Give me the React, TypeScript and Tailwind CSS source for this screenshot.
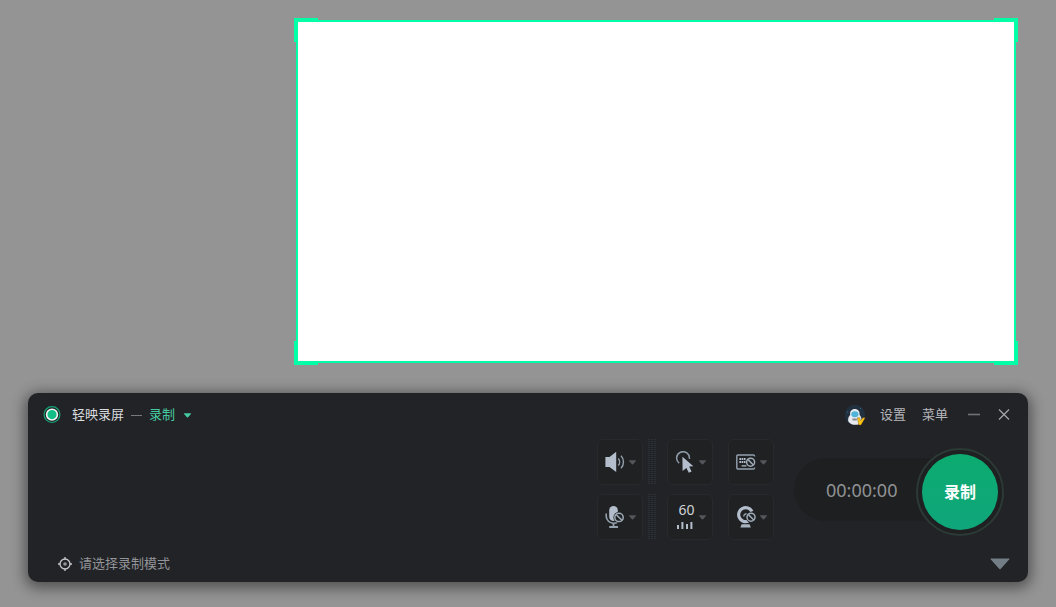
import React, { useState } from 'react';

const Caret: React.FC<{ className?: string }> = ({ className }) => (
  <svg viewBox="0 0 8 5" className={`w-[7px] h-[5px] shrink-0 ${className ?? ''}`} fill="currentColor" aria-hidden="true">
    <path d="M0.4 0h7.2a.4.4 0 0 1 .3.7L4.4 4.7a.55.55 0 0 1-.8 0L.1.7A.4.4 0 0 1 .4 0Z" />
  </svg>
);

const SpeakerIcon = () => (
  <svg viewBox="0 0 20 22" className="w-5 h-[22px]" fill="none" aria-hidden="true">
    <path d="M0.4 6H4.5L11.2 0.8V21L4.5 16H0.4Z" fill="#b3bdcb" />
    <path d="M13.3 7.4c1.7 2 1.7 5.2 0 7.2" stroke="#94a0ae" strokeWidth="1.5" />
    <path d="M16 4.8c3.3 3.3 3.3 9.1 0 12.4" stroke="#94a0ae" strokeWidth="1.4" />
  </svg>
);

const MicIcon = () => (
  <svg viewBox="0 0 20 22" className="w-5 h-[22px]" fill="none" aria-hidden="true">
    <rect x="4.2" y="0" width="8.6" height="15" rx="4.3" fill="#b3bdcb" />
    <path d="M1.2 7.6v2.8a7.2 7.2 0 0 0 7.3 6.8c1.7 0 3.2-.5 4.4-1.4" stroke="#94a0ae" strokeWidth="1.6" />
    <path d="M8.5 17v3.6M4.2 21h8.8" stroke="#94a0ae" strokeWidth="1.8" />
    <circle cx="14" cy="11.4" r="5.6" fill="#1f2123" />
    <circle cx="14" cy="11.4" r="4.2" stroke="#a0abb8" strokeWidth="1.5" />
    <path d="M11.1 8.5l5.8 5.8" stroke="#a0abb8" strokeWidth="1.5" />
  </svg>
);

const CursorIcon = () => (
  <svg viewBox="0 0 20 22" className="w-5 h-[22px]" fill="none" aria-hidden="true">
    <path d="M4.2 12.2A6.4 6.4 0 1 1 14.4 7.8" stroke="#8f9ba9" strokeWidth="1.5" />
    <path d="M7.4 5.8L18.4 15.2L14.2 15.6L16.6 20.4L13.8 21.8L11.4 17L7.6 20Z" fill="#b3bdcb" />
  </svg>
);

const KeyboardIcon = () => (
  <svg viewBox="0 0 20 22" className="w-5 h-[22px]" fill="none" aria-hidden="true">
    <path d="M18.6 5.4V5a1.2 1.2 0 0 0-1.2-1H2A1.2 1.2 0 0 0 .8 5.2v11.6A1.2 1.2 0 0 0 2 18h15.4a1.2 1.2 0 0 0 1.2-1v-.6" stroke="#94a0ae" strokeWidth="1.4" />
    <path d="M3.4 7h1.7v2H3.4zM5.7 7h1.7v2H5.7zM3.4 10h1.7v2H3.4zM5.7 10h1.7v2H5.7zM8 7h1.5v2H8zM8 10h1.5v2H8zM5.6 14.2h4.8v1.4H5.6z" fill="#b3bdcb" />
    <circle cx="14.6" cy="11.2" r="4" fill="#1f2123" stroke="#a0abb8" strokeWidth="1.5" />
    <path d="M11.8 8.4l5.6 5.6" stroke="#a0abb8" strokeWidth="1.5" />
  </svg>
);

const WebcamIcon = () => (
  <svg viewBox="0 0 20 22" className="w-5 h-[22px]" fill="none" aria-hidden="true">
    <path d="M15.9 5.4A7 7 0 1 0 12.4 15.1" stroke="#b3bdcb" strokeWidth="3.2" />
    <path d="M7.8 10.4a2.6 2.6 0 0 1 2.8-2.6" stroke="#94a0ae" strokeWidth="1.5" />
    <path d="M5.6 18.2h8l1.2 3.4H4.4z" fill="#a8b3c0" />
    <circle cx="15" cy="11.2" r="5.4" fill="#1f2123" />
    <circle cx="15" cy="11.2" r="4" stroke="#a0abb8" strokeWidth="1.5" />
    <path d="M12.2 8.4l5.6 5.6" stroke="#a0abb8" strokeWidth="1.5" />
  </svg>
);

const FrameRateIcon = () => (
  <span className="flex flex-col items-center pb-1">
    <span className="pl-1 text-sm leading-4 text-[#d2d5d9]">60</span>
    <svg viewBox="0 0 16 8" className="w-4 h-2 mt-[3px]" fill="#b3bdcb" aria-hidden="true">
      <path d="M0 4h2v4H0zM4.4 1h2v7h-2zM9 3h2v5H9zM13.4 1h2v7h-2z" />
    </svg>
  </span>
);

const AvatarIcon = () => (
  <svg viewBox="0 0 22 22" className="w-[22px] h-[22px]" aria-hidden="true">
    <circle cx="11" cy="11" r="10.2" fill="#21303f" />
    <circle cx="3.6" cy="8" r=".6" fill="#42729b" />
    <circle cx="16.5" cy="4.4" r=".5" fill="#42729b" />
    <path d="M4.2 17.2c-.4-3 .8-5.2 2-6.2C5.6 7.5 7.5 5 10.8 5s5.2 2.4 4.8 6c1.6 1.4 2.3 4 1.9 7.4-2.6 3.4-11 3.4-13.3-1.2Z" fill="#e6e9ee" />
    <ellipse cx="10.9" cy="10.3" rx="3.6" ry="3" fill="#4fb4d8" />
    <path d="M8.2 14.4h4.6v2.2H8.6z" fill="#8d8790" />
    <path d="M13.4 13.8h2.2l1 3 2.2-3h2.4l-4.2 7.2h-2.2Z" fill="#ffc414" stroke="#6a4c0c" strokeWidth=".4" />
  </svg>
);

const ToolButton: React.FC<{ label: string; children: React.ReactNode }> = ({ label, children }) => (
  <button
    aria-label={label}
    className="flex items-center justify-center gap-1 w-[46px] h-[46px] rounded-md border border-[#27292c] bg-[#1f2123] hover:bg-[#292b2f]"
  >
    <span className="flex items-center justify-center w-5">{children}</span>
    <Caret className="text-[#53565a]" />
  </button>
);

// Dotted volume meter, silent state
const LevelMeter = () => (
  <div className="w-2 h-[46px] ml-[5px] mr-[11px] bg-[#2c3135]">
    <div className="h-full bg-[repeating-linear-gradient(to_right,transparent_0_2px,#222327_2px_3px),repeating-linear-gradient(to_bottom,transparent_0_1px,#222327_1px_2px)]" />
  </div>
);

const CaptureFrame = () => (
  <div className="flex flex-1 ml-[266px] mr-[10px] p-0.5">
    <div className="relative flex-1 border-2 border-[#00ffa6] bg-white">
      <div className="absolute -top-1 -left-1 w-6 h-6 border-t-4 border-l-4 border-[#00ffa6]" />
      <div className="absolute -top-1 -right-1 w-6 h-6 border-t-4 border-r-4 border-[#00ffa6]" />
      <div className="absolute -bottom-1 -left-1 w-6 h-6 border-b-4 border-l-4 border-[#00ffa6]" />
      <div className="absolute -bottom-1 -right-1 w-6 h-6 border-b-4 border-r-4 border-[#00ffa6]" />
    </div>
  </div>
);

const App: React.FC = () => {
  const [mode, setMode] = useState('record');

  return (
    <div className="flex flex-col gap-7 min-h-screen px-7 pt-[18px] pb-[25px] bg-[#949494] font-['Noto_Sans','Noto_Sans_CJK_SC',sans-serif] text-[13px]">
      <CaptureFrame />

      <div className="flex flex-col rounded-[10px] bg-[#222327] shadow-[0_3px_14px_3px_rgba(0,0,0,0.45)]">
        {/* Title bar */}
        <header className="flex items-center justify-between h-11 pl-[15px] pr-[18px]">
          <div className="flex items-center">
            <svg viewBox="0 0 18 18" className="w-[18px] h-[18px]" fill="none" aria-hidden="true">
              <circle cx="9" cy="8.6" r="7.9" stroke="#12a474" strokeWidth="1.2" />
              <circle cx="9" cy="8.6" r="5.4" fill="#13bd86" stroke="#f1f5f4" strokeWidth="1.6" />
            </svg>
            <h1 className="ml-[11px] text-[#dcdddf]">轻映录屏</h1>
            <span className="w-[11px] h-px mx-[7px] bg-[#77797c]" />
            <label className="flex items-center gap-2 text-[#46cba1]">
              <select
                aria-label="模式"
                value={mode}
                onChange={(e) => setMode(e.target.value)}
                className="appearance-none w-[27px] bg-transparent outline-none"
              >
                <option value="record">录制</option>
                <option value="live">直播</option>
              </select>
              <Caret />
            </label>
          </div>

          <div className="flex items-center text-[#b5b7ba]">
            <button aria-label="账户"><AvatarIcon /></button>
            <button className="ml-[14px] hover:text-white">设置</button>
            <button className="ml-4 hover:text-white">菜单</button>
            <button aria-label="最小化" className="ml-5 text-[#707275] hover:text-white">
              <svg viewBox="0 0 12 12" className="w-3 h-3" stroke="currentColor" strokeWidth="1.6" aria-hidden="true">
                <path d="M0 5.5h12" />
              </svg>
            </button>
            <button aria-label="关闭" className="ml-[18px] text-[#a5a7aa] hover:text-white">
              <svg viewBox="0 0 12 12" className="w-3 h-3" stroke="currentColor" strokeWidth="1.2" aria-hidden="true">
                <path d="M1 0.5l10 10M11 0.5l-10 10" />
              </svg>
            </button>
          </div>
        </header>

        {/* Recording controls */}
        <main className="flex items-center justify-end h-[105px] pr-6">
          <div className="flex flex-col gap-[9px]">
            <div className="flex items-center">
              <ToolButton label="系统声音"><SpeakerIcon /></ToolButton>
              <LevelMeter />
              <ToolButton label="鼠标效果"><CursorIcon /></ToolButton>
              <div className="ml-[15px]">
                <ToolButton label="键盘显示"><KeyboardIcon /></ToolButton>
              </div>
            </div>
            <div className="flex items-center">
              <ToolButton label="麦克风"><MicIcon /></ToolButton>
              <LevelMeter />
              <ToolButton label="帧率"><FrameRateIcon /></ToolButton>
              <div className="ml-[15px]">
                <ToolButton label="摄像头"><WebcamIcon /></ToolButton>
              </div>
            </div>
          </div>

          <div className="flex items-center ml-5">
            <div className="flex items-center w-[164px] h-[63px] pl-8 rounded-l-full bg-[#1e1f20]">
              <time className="text-lg text-[#909295]">00:00:00</time>
            </div>
            <div className="-ml-[42px] mt-1 p-1 rounded-full border-2 border-[#2c3a35] bg-[#1e2021]">
              <button className="block w-[76px] h-[76px] rounded-full bg-linear-to-b from-[#0cab70] to-[#0fa67b] text-base font-bold text-white hover:brightness-110">
                录制
              </button>
            </div>
          </div>
        </main>

        {/* Status */}
        <footer className="flex items-center justify-between h-10 pl-[30px] pr-[18px] pt-1">
          <div className="flex items-center gap-[7px] text-[#929497]">
            <svg viewBox="0 0 14 14" className="w-[14px] h-[14px]" fill="none" stroke="#c5c7ca" strokeWidth="1.3" aria-hidden="true">
              <circle cx="7" cy="7" r="5" />
              <path d="M7 0v2.4M7 11.6V14M0 7h2.4M11.6 7H14" />
              <circle cx="7" cy="7" r="1.8" fill="#929497" stroke="none" />
            </svg>
            <p>请选择录制模式</p>
          </div>
          <button aria-label="展开" className="text-[#737d86] hover:text-white">
            <svg viewBox="0 0 20 12" className="w-5 h-3" fill="currentColor" aria-hidden="true">
              <path d="M1 0.5h18a.5.5 0 0 1 .4.8L10.6 11a.8.8 0 0 1-1.2 0L.6 1.3A.5.5 0 0 1 1 .5Z" />
            </svg>
          </button>
        </footer>
      </div>
    </div>
  );
};

export default App;
